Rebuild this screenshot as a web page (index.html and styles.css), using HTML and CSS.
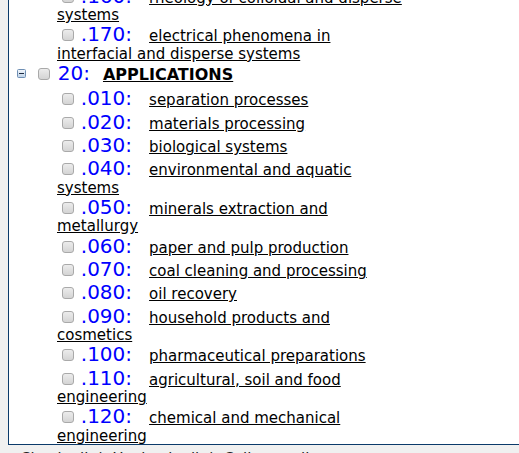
FILE: index.html
```html
<!DOCTYPE html>
<html>
<head>
<meta charset="utf-8">
<link rel="stylesheet" href="styles.css">
</head>
<body>
<div class="tree">
  <div class="tree-inner">
    <div class="item"><input type="checkbox" class="cb"> <span class="code">.150:</span><a class="desc" href="#">stability of colloidal and disperse systems</a></div>
    <div class="item"><input type="checkbox" class="cb"> <span class="code">.160:</span><a class="desc" href="#">rheology of colloidal and disperse systems</a></div>
    <div class="item"><input type="checkbox" class="cb"> <span class="code">.170:</span><a class="desc" href="#">electrical phenomena in interfacial and disperse systems</a></div>
    <div class="group"><span class="toggle"><svg width="9" height="9" viewBox="0 0 9 9"><defs><linearGradient id="tg" x1="0" y1="0" x2="0" y2="1"><stop offset="0" stop-color="#f4f8fc"/><stop offset="1" stop-color="#bcd0e6"/></linearGradient></defs><rect x="0.5" y="0.5" width="8" height="8" rx="1" fill="url(#tg)" stroke="#6f8fb4"/><rect x="2" y="4" width="5" height="1" fill="#1c2c44"/></svg></span><input type="checkbox" class="cb gcb"> <span class="code gcode">20:</span><a class="title" href="#">APPLICATIONS</a></div>
    <div class="item"><input type="checkbox" class="cb"> <span class="code">.010:</span><a class="desc" href="#">separation processes</a></div>
    <div class="item"><input type="checkbox" class="cb"> <span class="code">.020:</span><a class="desc" href="#">materials processing</a></div>
    <div class="item"><input type="checkbox" class="cb"> <span class="code">.030:</span><a class="desc" href="#">biological systems</a></div>
    <div class="item"><input type="checkbox" class="cb"> <span class="code">.040:</span><a class="desc" href="#">environmental and aquatic systems</a></div>
    <div class="item"><input type="checkbox" class="cb"> <span class="code">.050:</span><a class="desc" href="#">minerals extraction and metallurgy</a></div>
    <div class="item"><input type="checkbox" class="cb"> <span class="code">.060:</span><a class="desc" href="#">paper and pulp production</a></div>
    <div class="item"><input type="checkbox" class="cb"> <span class="code">.070:</span><a class="desc" href="#">coal cleaning and processing</a></div>
    <div class="item"><input type="checkbox" class="cb"> <span class="code">.080:</span><a class="desc" href="#">oil recovery</a></div>
    <div class="item"><input type="checkbox" class="cb"> <span class="code">.090:</span><a class="desc" href="#">household products and cosmetics</a></div>
    <div class="item"><input type="checkbox" class="cb"> <span class="code">.100:</span><a class="desc" href="#">pharmaceutical preparations</a></div>
    <div class="item"><input type="checkbox" class="cb"> <span class="code">.110:</span><a class="desc" href="#">agricultural, soil and food engineering</a></div>
    <div class="item"><input type="checkbox" class="cb"> <span class="code">.120:</span><a class="desc" href="#">chemical and mechanical engineering</a></div>
  </div>
</div>
<p class="below">Check all &nbsp;|&nbsp; Uncheck all &nbsp;|&nbsp; Collapse all</p>
</body>
</html>
```
FILE: styles.css
```css
html, body {
  margin: 0;
  padding: 0;
}
body {
  background: #f0f0f0;
  font-family: "DejaVu Sans", Verdana, sans-serif;
  font-size: 15px;
  color: #000;
  overflow: hidden;
}
.tree {
  margin-left: 8px;
  height: 445px;
  box-sizing: border-box;
  background: #fff;
  border-left: 1px solid #0b3a6a;
  border-bottom: 1px solid #0b3a6a;
  display: flex;
  flex-direction: column;
  justify-content: flex-end;
  overflow: hidden;
}
.tree-inner {
  width: 394px;
}
.item {
  padding-left: 48px;
  line-height: 15.4px;
}
.group {
  padding-left: 8px;
  line-height: 16px;
  margin: 0 0 2px;
}
.cb {
  -webkit-appearance: none;
  appearance: none;
  width: 12px;
  height: 12px;
  margin: 0 2px 0 5px;
  border: 1px solid #a9a9a9;
  border-radius: 3px;
  background: linear-gradient(#ececec, #d4d4d4);
  vertical-align: baseline;
  box-sizing: border-box;
}
.gcb {
  margin-left: 12px;
  margin-right: 3px;
}
.toggle {
  display: inline-block;
  width: 9px;
  height: 9px;
  vertical-align: 2px;
}
.toggle svg {
  display: block;
}
.code {
  font-size: 20px;
  line-height: 23.3px;
  color: #0000ff;
  margin-right: 17px;
}
.gcode {
  margin-right: 13px;
}
.desc {
  color: #000;
  text-decoration: underline;
}
.title {
  color: #000;
  font-weight: bold;
  font-size: 16px;
  text-decoration: underline;
}
.below {
  margin: 5px 0 0 20px;
  font-size: 15px;
  color: #222;
}
```
